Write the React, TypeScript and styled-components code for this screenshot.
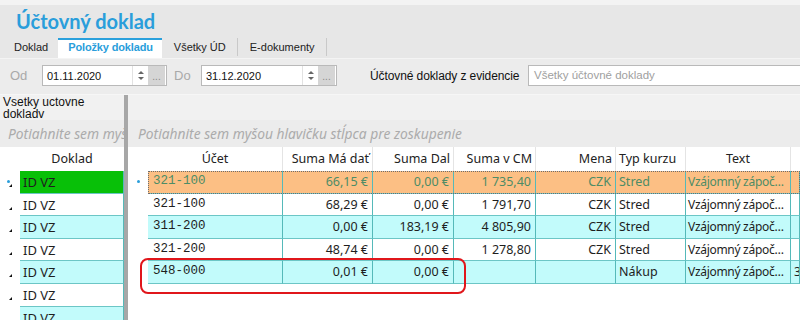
import React from "react";
import styled, { createGlobalStyle, css } from "styled-components";

const Global = createGlobalStyle`
  html, body { margin: 0; padding: 0; }
  body { width: 800px; height: 320px; overflow: hidden; background: #e7e7e7; font-family: "Liberation Sans", Arial, sans-serif; }
  * { box-sizing: border-box; }
`;

const Page = styled.div`
  width: 800px;
  height: 320px;
  display: flex;
  flex-direction: column;
  position: relative;
  overflow: hidden;
`;

const TopStrip = styled.div`
  height: 5px;
  background: #f3f3f3;
  flex: none;
`;

const Header = styled.div`
  background: #e7e7e7;
  flex: none;
`;

const Title = styled.h1`
  margin: 0;
  height: 33px;
  padding: 3px 0 0 16px;
  font-family: Lato, "Noto Sans", sans-serif;
  font-weight: 700;
  font-size: 20px;
  line-height: 26px;
  color: #2a9edb;
`;

const Tabs = styled.div`
  display: flex;
  height: 20px;
  padding-left: 2px;
  align-items: stretch;
`;

const Tab = styled.div<{ $active?: boolean; $sep?: boolean }>`
  position: relative;
  padding: 3px 10px 0 12px;
  font-size: 11px;
  color: #222;
  white-space: nowrap;
  ${(p) =>
    p.$active &&
    css`
      background: #ffffff;
      border-top: 2px solid #2aa0dc;
      padding: 1px 9px 0 10px;
      color: #2a9edb;
      font-weight: 700;
      letter-spacing: -0.15px;
    `}
  ${(p) =>
    p.$sep &&
    css`
      border-right: 1px solid #c9c9c9;
      margin-bottom: 2px;
      padding-right: 11px;
    `}
`;

const FilterBar = styled.div`
  height: 36px;
  background: #ececec;
  border-top: 1px solid #f4f4f4;
  display: flex;
  align-items: center;
  padding: 0 0 2px 10px;
  flex: none;
`;

const DimLabel = styled.span<{ $w: number; $pad?: number }>`
  font-size: 13px;
  color: #a9a9a9;
  width: ${(p) => p.$w}px;
  padding-left: ${(p) => p.$pad || 0}px;
  flex: none;
`;

const DateBox = styled.div<{ $w: number }>`
  width: ${(p) => p.$w}px;
  height: 21px;
  background: #fff;
  border: 1px solid #b9b9b9;
  display: flex;
  align-items: center;
  flex: none;
`;

const DateText = styled.span`
  flex: 1;
  padding-left: 4px;
  font-size: 11px;
  color: #111;
`;

const Spin = styled.div`
  width: 16px;
  height: 19px;
  display: flex;
  flex-direction: column;
  align-items: center;
  justify-content: center;
  gap: 3px;
  border-left: 1px solid #e2e2e2;
`;

const Arrow = styled.span<{ $down?: boolean }>`
  width: 0;
  height: 0;
  border-left: 3px solid transparent;
  border-right: 3px solid transparent;
  ${(p) =>
    p.$down
      ? css`border-top: 3px solid #666;`
      : css`border-bottom: 3px solid #666;`}
`;

const Dots = styled.div`
  width: 17px;
  height: 19px;
  background: #d5d5d5;
  color: #8a8a8a;
  font-size: 10px;
  text-align: center;
  line-height: 22px;
  margin-right: 1px;
`;

const FilterLabel = styled.span`
  font-size: 12px;
  color: #111;
  margin-left: 33px;
  width: 158px;
  flex: none;
  white-space: nowrap;
  letter-spacing: -0.1px;
`;

const Combo = styled.div`
  flex: 1;
  height: 21px;
  background: #fff;
  border: 1px solid #b9b9b9;
  border-right: none;
  font-size: 11.5px;
  color: #a0a0a0;
  padding: 3px 0 0 5px;
`;

const Main = styled.div`
  flex: 1;
  display: flex;
  min-height: 0;
  border-top: 1px solid #f6f6f6;
`;

const LeftPanel = styled.div`
  width: 124px;
  display: flex;
  flex-direction: column;
  background: #f1f1f1;
  overflow: hidden;
  flex: none;
`;

const Splitter = styled.div`
  width: 4px;
  background: #a7a7a7;
  flex: none;
`;

const RightPanel = styled.div`
  flex: 1;
  display: flex;
  flex-direction: column;
  background: #f1f1f1;
  overflow: hidden;
  min-width: 0;
`;

const Caption = styled.div`
  height: 25px;
  flex: none;
  padding: 1px 0 0 3px;
  font-size: 12px;
  line-height: 12px;
  color: #111;
  width: 100px;
`;

const GroupRow = styled.div<{ $pad: number }>`
  height: 27px;
  flex: none;
  background: #ececec;
  padding: 4px 0 0 ${(p) => p.$pad}px;
  font-family: "Noto Sans", sans-serif;
  font-style: italic;
  font-size: 13.8px;
  color: #ababab;
  white-space: nowrap;
  overflow: hidden;
`;

const Grid = styled.div`
  flex: 1;
  min-height: 0;
  overflow: hidden;
  background: #fff;
  font-family: "Noto Sans", sans-serif;
  font-size: 12px;
  color: #222;
`;

const LeftCols = "20px 104px";
const RightCols = "20px 135px 90px 81px 82px 80px 70px 105px 1fr";

const HeadRow = styled.div<{ $cols: string }>`
  display: grid;
  grid-template-columns: ${(p) => p.$cols};
  height: 24px;
  background: #fff;
  font-size: 12.5px;
`;

const HeadCell = styled.div<{ $align?: string }>`
  padding: 3px 3px 0 3px;
  text-align: ${(p) => p.$align || "center"};
  border-right: 1px solid #e4e4e4;
  white-space: nowrap;
  overflow: hidden;
  color: #222;
  &:first-child { border-right: none; }
  &:last-child { border-right: none; }
`;

type Variant = "orange" | "white" | "cyan" | "green";

const bg: Record<Variant, string> = {
  orange: "#fcbf84",
  white: "#ffffff",
  cyan: "#c2fbfb",
  green: "#08c008",
};

const DataRow = styled.div<{ $cols: string; $v: Variant; $focus?: boolean }>`
  display: grid;
  grid-template-columns: ${(p) => p.$cols};
  height: 22.6px;
  position: relative;
  color: ${(p) => (p.$v === "orange" ? "#4d8c66" : "#1e1e1e")};
  & > div:not(:first-child) {
    background: ${(p) => bg[p.$v]};
    border-bottom: 1px solid #6cc6c6;
    border-right: 1px solid #55b9b9;
  }
  ${(p) =>
    p.$focus &&
    css`
      &::after {
        content: "";
        position: absolute;
        left: 20px;
        right: 0;
        top: 0;
        bottom: 0;
        border: 1px dotted #6d6d6d;
        pointer-events: none;
      }
    `}
`;

const Cell = styled.div<{ $align?: string; $mono?: boolean; $size?: number; $tight?: boolean }>`
  padding: 2px 4px 0 3px;
  text-align: ${(p) => p.$align || "left"};
  white-space: nowrap;
  overflow: hidden;
  text-overflow: ellipsis;
  font-size: ${(p) => p.$size || 12.5}px;
  ${(p) =>
    p.$tight &&
    css`
      letter-spacing: -0.3px;
      padding: 2px 2px 0 2px;
    `}
  ${(p) =>
    p.$mono &&
    css`
      font-family: "Liberation Mono", "Courier New", monospace;
      font-size: 12.5px;
      padding-left: 5px;
      padding-top: 3px;
    `}
`;

const Indicator = styled.div`
  position: relative;
  background: #fff;
`;

const Dot = styled.span<{ $x: number }>`
  position: absolute;
  left: ${(p) => p.$x}px;
  top: 9px;
  width: 3px;
  height: 3px;
  border-radius: 50%;
  background: #2a9edb;
`;

const Tri = styled.span`
  position: absolute;
  left: 9px;
  top: 13px;
  width: 0;
  height: 0;
  border-left: 3px solid transparent;
  border-bottom: 3px solid #111;
`;

const Annotation = styled.div`
  position: absolute;
  left: 140px;
  top: 258px;
  width: 326px;
  height: 36px;
  border: 2px solid #e0161b;
  border-radius: 8px;
  pointer-events: none;
`;

const TXT = "Vzájomný zápočet pohľadávok";

const rightRows: { v: Variant; cells: string[] }[] = [
  { v: "orange", cells: ["321-100", "66,15 €", "0,00 €", "1 735,40", "CZK", "Stred", TXT, ""] },
  { v: "white", cells: ["321-100", "68,29 €", "0,00 €", "1 791,70", "CZK", "Stred", TXT, ""] },
  { v: "cyan", cells: ["311-200", "0,00 €", "183,19 €", "4 805,90", "CZK", "Stred", TXT, ""] },
  { v: "white", cells: ["321-200", "48,74 €", "0,00 €", "1 278,80", "CZK", "Stred", TXT, ""] },
  { v: "cyan", cells: ["548-000", "0,01 €", "0,00 €", "", "", "Nákup", TXT, "3"] },
];

const aligns = ["left", "right", "right", "right", "right", "left", "left", "left"];

const leftRows: Variant[] = ["green", "white", "cyan", "white", "cyan", "white", "cyan"];

export default function App() {
  return (
    <Page>
      <Global />
      <TopStrip />
      <Header>
        <Title>Účtovný doklad</Title>
        <Tabs>
          <Tab>Doklad</Tab>
          <Tab $active>Položky dokladu</Tab>
          <Tab $sep>Všetky ÚD</Tab>
          <Tab $sep>E-dokumenty</Tab>
        </Tabs>
      </Header>
      <FilterBar>
        <DimLabel $w={32}>Od</DimLabel>
        <DateBox $w={125}>
          <DateText>01.11.2020</DateText>
          <Spin>
            <Arrow />
            <Arrow $down />
          </Spin>
          <Dots>...</Dots>
        </DateBox>
        <DimLabel $w={34} $pad={7}>Do</DimLabel>
        <DateBox $w={136}>
          <DateText>31.12.2020</DateText>
          <Spin>
            <Arrow />
            <Arrow $down />
          </Spin>
          <Dots>...</Dots>
        </DateBox>
        <FilterLabel>Účtovné doklady z evidencie</FilterLabel>
        <Combo>Všetky účtovné doklady</Combo>
      </FilterBar>
      <Main>
        <LeftPanel>
          <Caption>Vsetky uctovne dokladv</Caption>
          <GroupRow $pad={8}>Potiahnite sem myšou hlavičku stĺpca pre zoskupenie</GroupRow>
          <Grid>
            <HeadRow $cols={LeftCols}>
              <HeadCell />
              <HeadCell>Doklad</HeadCell>
            </HeadRow>
            {leftRows.map((v, i) => (
              <DataRow key={i} $cols={LeftCols} $v={v}>
                <Indicator>
                  {i === 0 && <Dot $x={7} />}
                  <Tri />
                </Indicator>
                <Cell $size={13}>ID VZ</Cell>
              </DataRow>
            ))}
          </Grid>
        </LeftPanel>
        <Splitter />
        <RightPanel>
          <Caption />
          <GroupRow $pad={10}>Potiahnite sem myšou hlavičku stĺpca pre zoskupenie</GroupRow>
          <Grid>
            <HeadRow $cols={RightCols}>
              <HeadCell />
              <HeadCell>Účet</HeadCell>
              <HeadCell $align="right">Suma Má dať</HeadCell>
              <HeadCell $align="right">Suma Dal</HeadCell>
              <HeadCell $align="right">Suma v CM</HeadCell>
              <HeadCell $align="right">Mena</HeadCell>
              <HeadCell $align="left">Typ kurzu</HeadCell>
              <HeadCell>Text</HeadCell>
              <HeadCell />
            </HeadRow>
            {rightRows.map((r, i) => (
              <DataRow key={i} $cols={RightCols} $v={r.v} $focus={i === 0}>
                <Indicator>{i === 0 && <Dot $x={9} />}</Indicator>
                {r.cells.map((c, j) => (
                  <Cell
                    key={j}
                    $align={aligns[j]}
                    $mono={j === 0}
                    $size={j === 6 ? 12 : 12.5}
                    $tight={j === 6}
                  >
                    {c}
                  </Cell>
                ))}
              </DataRow>
            ))}
          </Grid>
        </RightPanel>
      </Main>
      <Annotation />
    </Page>
  );
}
